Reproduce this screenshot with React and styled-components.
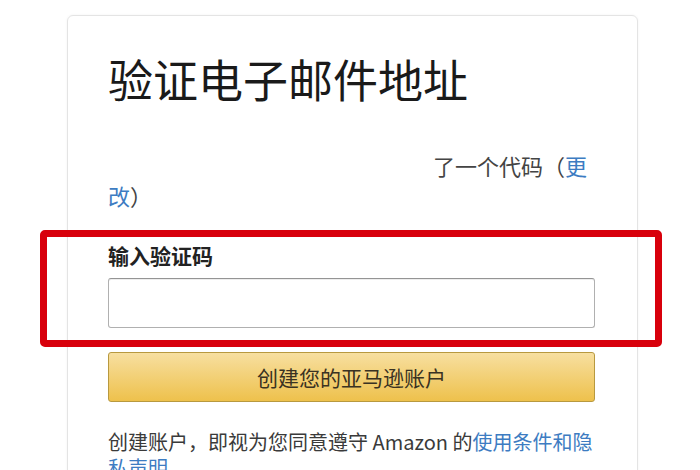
import React from 'react';
import styled, {createGlobalStyle} from 'styled-components';

const GlobalStyle = createGlobalStyle`
  html, body {
    margin: 0;
    padding: 0;
    background: #fff;
  }
  body {
    width: 700px;
    height: 470px;
    overflow: hidden;
    font-family: "Noto Sans CJK SC", "Noto Sans", "Liberation Sans", sans-serif;
  }
`;

const Card = styled.div`
  box-sizing: border-box;
  width: 571px;
  margin: 15px 0 0 67px;
  padding: 36px 42px 40px 40px;
  border: 1px solid #e4e4e4;
  border-radius: 6px;
  box-shadow: 0 0 3px rgba(0, 0, 0, 0.05);
`;

const Title = styled.h1`
  margin: 0;
  font-size: 45px;
  line-height: 54px;
  font-weight: 400;
  color: #1a1a1a;
`;

const Notice = styled.p`
  margin: 44px 0 0;
  text-indent: 325px;
  font-size: 22px;
  line-height: 30px;
  color: #444;
`;

const Link = styled.a`
  color: #3d7cc2;
  text-decoration: none;
`;

const Highlight = styled.div`
  margin: 20px -67px 0 -68px;
  padding: 5px 60px 12px 61px;
  border: 7px solid #d8000c;
  border-radius: 5px;
`;

const Label = styled.label`
  display: block;
  margin-bottom: 10px;
  font-size: 21px;
  line-height: 26px;
  font-weight: 700;
  color: #222;
`;

const Input = styled.input`
  display: block;
  box-sizing: border-box;
  width: 100%;
  height: 50px;
  border: 1px solid #b0b0b0;
  border-top-color: #949494;
  border-radius: 3px;
  box-shadow: inset 0 1px 0 rgba(0, 0, 0, 0.07);
  background: #fff;
`;

const Button = styled.button`
  display: block;
  box-sizing: border-box;
  width: 100%;
  height: 50px;
  margin-top: 5px;
  border: 1px solid #b8993f;
  border-radius: 3px;
  background: linear-gradient(to bottom, #f7dfa0, #eec14c);
  font-family: inherit;
  font-size: 21px;
  color: #3a3222;
`;

const Legal = styled.p`
  margin: 27px 0 0;
  font-size: 20px;
  line-height: 26px;
  color: #3a3a3a;
`;

export default function App() {
  return (
    <>
      <GlobalStyle />
      <Card>
        <Title>验证电子邮件地址</Title>
        <Notice>
          了一个代码（<Link href="#">更改</Link>）
        </Notice>
        <Highlight>
          <Label htmlFor="code">输入验证码</Label>
          <Input id="code" type="text" />
        </Highlight>
        <Button type="button">创建您的亚马逊账户</Button>
        <Legal>
          创建账户，即视为您同意遵守 Amazon 的<Link href="#">使用条件和隐私声明</Link>。
        </Legal>
      </Card>
    </>
  );
}
